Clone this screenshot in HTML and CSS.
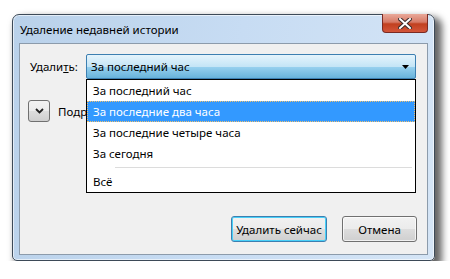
FILE: index.html
```html
<!DOCTYPE html>
<html lang="ru">
<head>
<meta charset="utf-8">
<link rel="stylesheet" href="styles.css">
</head>
<body>
<div class="window">
  <div class="titlebar">
    <span class="title">Удаление недавней истории</span>
    <div class="close">
      <svg width="14" height="11" viewBox="0 0 14 11"><path d="M2 1 L12 10 M12 1 L2 10" stroke="#3a2a2a" stroke-width="4" stroke-linecap="square"/><path d="M2 1 L12 10 M12 1 L2 10" stroke="#fff" stroke-width="2" stroke-linecap="square"/></svg>
    </div>
  </div>
  <div class="client">
    <div class="row">
      <span class="label">Удали<u>т</u>ь:</span>
      <div class="combo">
        <span>За последний час</span>
        <svg class="arrow" width="7" height="4" viewBox="0 0 7 4"><path d="M0 0 H7 L3.5 4 Z" fill="#000"/></svg>
      </div>
    </div>
    <div class="details">
      <div class="chev">
        <svg width="9" height="6" viewBox="0 0 9 6"><path d="M1 1 L4.5 4.5 L8 1" stroke="#222" stroke-width="1.8" fill="none"/></svg>
      </div>
      <span class="details-label">Подр</span>
    </div>
    <div class="buttons">
      <div class="btn default">Удалить сейчас</div>
      <div class="btn">Отмена</div>
    </div>
    <ul class="list">
      <li>За последний час</li>
      <li class="sel">За последние два часа</li>
      <li>За последние четыре часа</li>
      <li>За сегодня</li>
      <li class="sep"></li>
      <li>Всё</li>
    </ul>
  </div>
</div>
</body>
</html>
```

FILE: styles.css
```css
html, body {
  margin: 0;
  padding: 0;
  background: #fff;
  font-family: "Noto Sans", "DejaVu Sans", sans-serif;
  font-size: 11.5px;
  color: #000;
}
.window {
  position: relative;
  margin: 14px 0 0 12px;
  width: 421px;
  height: 245px;
  border: 1px solid #3d4a58;
  border-radius: 7px 7px 5px 5px;
  background: linear-gradient(100deg, #b9d1ea 0%, #c7dcf3 50%, #d5e5f6 100%);
  box-shadow: 5px 5px 7px 2px rgba(0,0,0,0.6), inset 0 0 0 1px rgba(255,255,255,0.6);
  display: flex;
  flex-direction: column;
}
.titlebar {
  position: relative;
  height: 28px;
  display: flex;
  align-items: center;
  padding-left: 7px;
}
.title {
  color: #000;
  margin-top: 1px;
}
.close {
  position: absolute;
  top: -1px;
  right: 6px;
  width: 44px;
  height: 18px;
  border: 1px solid #7a2a22;
  border-top: none;
  border-radius: 0 0 4px 4px;
  background: linear-gradient(#e9a99a 0%, #d77a66 45%, #c1401f 55%, #d3553a 100%);
  display: flex;
  align-items: center;
  justify-content: center;
}
.client {
  position: relative;
  flex: 1;
  margin: 0 6px 5px 6px;
  border: 1px solid #8c9bab;
  background: #f0f0f0;
  display: flex;
  flex-direction: column;
}
.row {
  display: flex;
  align-items: center;
  margin: 10px 0 0 10px;
}
.label {
  width: 56px;
}
.combo {
  box-sizing: border-box;
  width: 330px;
  height: 25px;
  border: 1px solid #3c7fb1;
  border-radius: 2px;
  background: linear-gradient(#e5f4fc 0%, #c4e5f6 50%, #98d1ef 51%, #68b3db 100%);
  display: flex;
  align-items: center;
  justify-content: space-between;
  padding: 0 6px 0 4px;
}
.arrow { margin-top: 1px; }
.details {
  display: flex;
  align-items: center;
  margin: 21px 0 0 8px;
}
.chev {
  box-sizing: border-box;
  width: 22px;
  height: 22px;
  border: 1px solid #707070;
  border-radius: 3px;
  background: linear-gradient(#f2f2f2 0%, #ebebeb 50%, #dddddd 51%, #cfcfcf 100%);
  display: flex;
  align-items: center;
  justify-content: center;
  margin-right: 8px;
}
.buttons {
  margin-top: auto;
  margin-bottom: 12px;
  display: flex;
  justify-content: flex-end;
  gap: 15px;
  padding-right: 10px;
}
.btn {
  box-sizing: border-box;
  height: 26px;
  width: 75px;
  border: 1px solid #707070;
  border-radius: 3px;
  background: linear-gradient(#f2f2f2 0%, #ebebeb 50%, #dddddd 51%, #cfcfcf 100%);
  display: flex;
  align-items: center;
  justify-content: center;
  box-shadow: inset 0 0 0 1px rgba(255,255,255,0.7);
}
.btn.default {
  width: 96px;
  border-color: #3c7fb1;
  box-shadow: inset 0 0 0 1px #48d0f8;
}
.list {
  position: absolute;
  left: 66px;
  top: 35px;
  width: 330px;
  box-sizing: border-box;
  margin: 0;
  padding: 0;
  list-style: none;
  background: #fff;
  border: 1px solid #000;
}
.list li {
  height: 21px;
  line-height: 21px;
  padding-left: 6px;
}
.list li.sel {
  background: #3399ff;
  color: #fff;
  outline: 1px dotted #f0c070;
  outline-offset: -1px;
}
.list li.sep {
  padding: 0;
  margin: 0 3px 3px 28px;
  height: 4px;
  border-bottom: 1px solid #dcdcdc;
  box-sizing: border-box;
}
```
